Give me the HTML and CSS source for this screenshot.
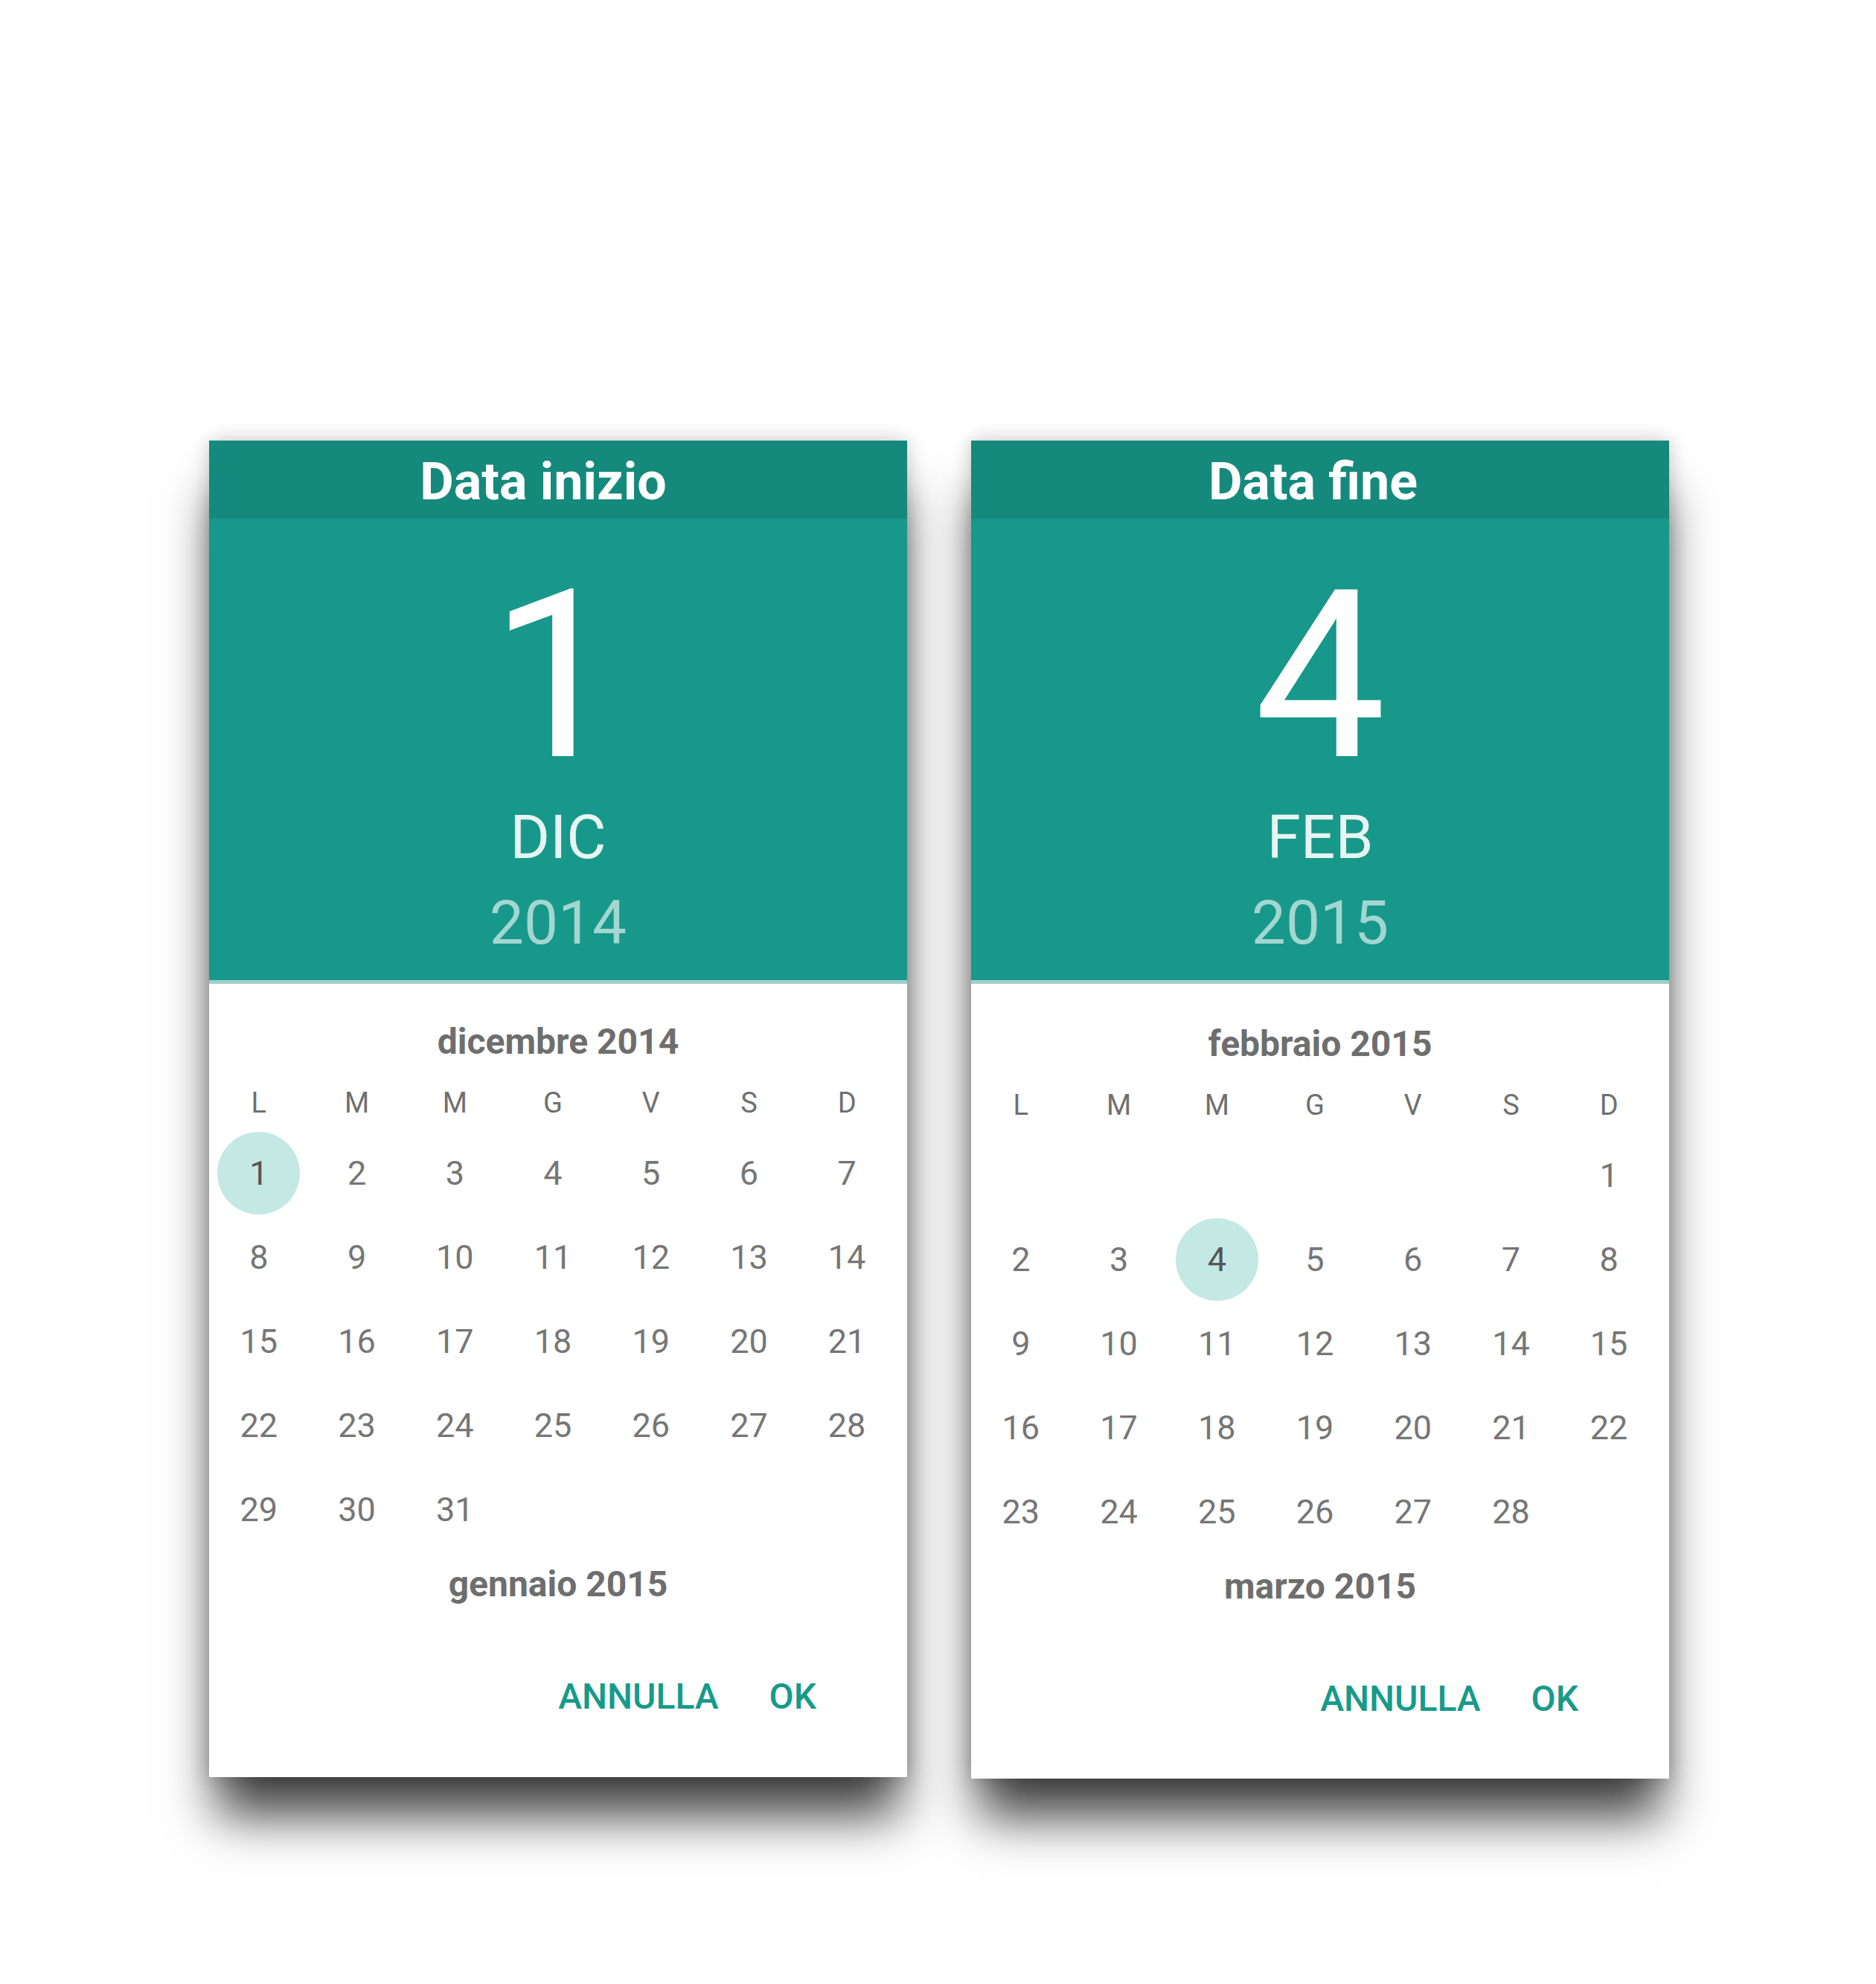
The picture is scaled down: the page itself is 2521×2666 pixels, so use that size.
FILE: index.html
```html
<!DOCTYPE html>
<html lang="it">
<head>
<meta charset="utf-8">
<title>Date picker</title>
<link rel="stylesheet" href="styles.css">
</head>
<body>
<div class="stage">
  <section class="picker">
    <header class="picker-title picker-title--start">Data inizio</header>
    <div class="picker-head">
      <div class="head-day head-day--one">1</div>
      <div class="head-month">DIC</div>
      <div class="head-year">2014</div>
    </div>
    <div class="picker-body">
      <div class="month-label">dicembre 2014</div>
      <div class="weekdays">
        <span>L</span><span>M</span><span>M</span><span>G</span><span>V</span><span>S</span><span>D</span>
      </div>
      <div class="days">
        <span class="day day--selected">1</span><span class="day">2</span><span class="day">3</span><span class="day">4</span><span class="day">5</span><span class="day">6</span><span class="day">7</span>
        <span class="day">8</span><span class="day">9</span><span class="day">10</span><span class="day">11</span><span class="day">12</span><span class="day">13</span><span class="day">14</span>
        <span class="day">15</span><span class="day">16</span><span class="day">17</span><span class="day">18</span><span class="day">19</span><span class="day">20</span><span class="day">21</span>
        <span class="day">22</span><span class="day">23</span><span class="day">24</span><span class="day">25</span><span class="day">26</span><span class="day">27</span><span class="day">28</span>
        <span class="day">29</span><span class="day">30</span><span class="day">31</span><span class="day"></span><span class="day"></span><span class="day"></span><span class="day"></span>
      </div>
      <div class="month-label month-label--next">gennaio 2015</div>
      <div class="actions">
        <span class="action">ANNULLA</span>
        <span class="action">OK</span>
      </div>
    </div>
  </section>

  <section class="picker">
    <header class="picker-title picker-title--end">Data fine</header>
    <div class="picker-head">
      <div class="head-day">4</div>
      <div class="head-month">FEB</div>
      <div class="head-year">2015</div>
    </div>
    <div class="picker-body picker-body--end">
      <div class="month-label">febbraio 2015</div>
      <div class="weekdays">
        <span>L</span><span>M</span><span>M</span><span>G</span><span>V</span><span>S</span><span>D</span>
      </div>
      <div class="days">
        <span class="day"></span><span class="day"></span><span class="day"></span><span class="day"></span><span class="day"></span><span class="day"></span><span class="day">1</span>
        <span class="day">2</span><span class="day">3</span><span class="day day--selected">4</span><span class="day">5</span><span class="day">6</span><span class="day">7</span><span class="day">8</span>
        <span class="day">9</span><span class="day">10</span><span class="day">11</span><span class="day">12</span><span class="day">13</span><span class="day">14</span><span class="day">15</span>
        <span class="day">16</span><span class="day">17</span><span class="day">18</span><span class="day">19</span><span class="day">20</span><span class="day">21</span><span class="day">22</span>
        <span class="day">23</span><span class="day">24</span><span class="day">25</span><span class="day">26</span><span class="day">27</span><span class="day">28</span><span class="day"></span>
      </div>
      <div class="month-label month-label--next">marzo 2015</div>
      <div class="actions">
        <span class="action">ANNULLA</span>
        <span class="action">OK</span>
      </div>
    </div>
  </section>
</div>
</body>
</html>
```

FILE: styles.css
```css
html, body {
  margin: 0;
  padding: 0;
  background: #ffffff;
}

body {
  font-family: Roboto, "Noto Sans", "Liberation Sans", sans-serif;
  min-height: 2666px;
}

.stage {
  display: flex;
  align-items: flex-start;
  gap: 86px;
  padding: 592px 0 260px 281px;
}

.picker {
  width: 938px;
  display: flex;
  flex-direction: column;
  background: #ffffff;
  box-shadow: 0 62px 64px -10px rgba(0, 0, 0, 0.75), 0 0 24px rgba(0, 0, 0, 0.22);
}

.picker-title {
  height: 105px;
  box-sizing: border-box;
  padding-top: 5px;
  display: flex;
  align-items: center;
  justify-content: center;
  background: #158a7c;
  color: #ffffff;
  font-size: 70px;
  font-weight: 700;
  line-height: 1;
}

.picker-title--start {
  padding-right: 40px;
}

.picker-title--end {
  padding-right: 19px;
}

.picker-head {
  height: 625px;
  box-sizing: border-box;
  padding-top: 52px;
  background: #17988a;
  border-bottom: 5px solid #a0cdc7;
  display: flex;
  flex-direction: column;
  align-items: center;
  text-align: center;
}

.head-day {
  font-size: 315px;
  line-height: 320px;
  font-weight: 400;
  color: #ffffff;
}

.head-day--one {
  padding-right: 6px;
}

.head-month {
  margin-top: 6px;
  font-size: 82px;
  line-height: 100px;
  color: #e6f4f2;
}

.head-year {
  margin-top: 15px;
  font-size: 82px;
  line-height: 100px;
  color: #a2d6d0;
}

.picker-body {
  display: flex;
  flex-direction: column;
  padding: 48px 0 78px;
}

.picker-body--end {
  padding-top: 51px;
  padding-bottom: 77px;
}

.month-label {
  text-align: center;
  font-size: 48px;
  line-height: 60px;
  font-weight: 700;
  color: #6e6e6e;
}

.month-label--next {
  margin-top: 14px;
}

.weekdays {
  margin-top: 27px;
  display: grid;
  grid-template-columns: repeat(7, 1fr);
  padding: 0 15px 0 1px;
  font-size: 38px;
  line-height: 50px;
  color: #707070;
  text-align: center;
}

.days {
  margin-top: 13px;
  display: grid;
  grid-template-columns: repeat(7, 1fr);
  grid-auto-rows: 113px;
  padding: 0 15px 0 1px;
}

.day {
  display: flex;
  align-items: center;
  justify-content: center;
  font-size: 45px;
  color: #767676;
}

.day--selected {
  justify-self: center;
  align-self: center;
  width: 111px;
  height: 111px;
  border-radius: 50%;
  background: #c4e8e4;
  color: #555555;
}

.actions {
  margin-top: 91px;
  display: flex;
  justify-content: flex-end;
  gap: 68px;
  padding-right: 122px;
}

.action {
  font-size: 48px;
  line-height: 60px;
  font-weight: 500;
  color: #179a8a;
}
```
